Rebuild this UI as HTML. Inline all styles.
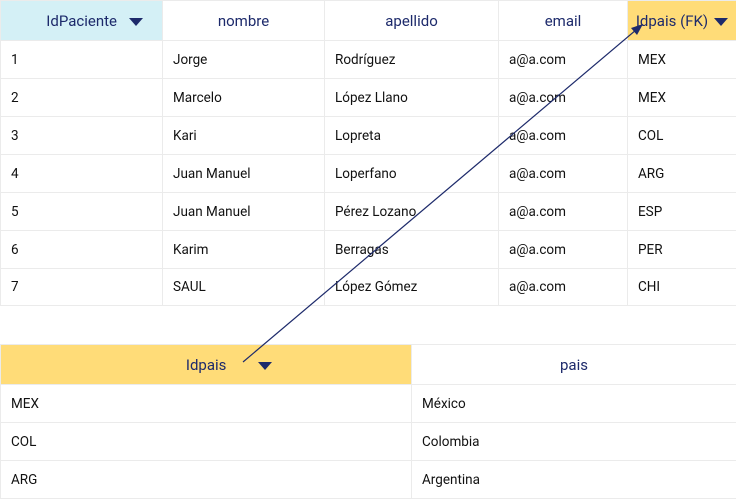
<!DOCTYPE html>
<html><head><meta charset="utf-8"><style>
body{margin:0;width:736px;height:499px;background:#fff;position:relative;overflow:hidden;font-family:"Roboto","Liberation Sans",sans-serif}
table{border-collapse:collapse;position:absolute;left:0;table-layout:fixed}
td,th{border:1px solid #ebebeb;padding:0 0 0 10px;font-size:13.5px;color:#111;text-align:left;font-weight:normal;white-space:nowrap}
th{color:#1d2a6b;font-size:15px;text-align:center;padding:0}
.tri{display:inline-block;width:0;height:0;border-left:7px solid transparent;border-right:7px solid transparent;border-top:8px solid #1d2a6b;vertical-align:middle;margin-left:6px}
</style></head><body>
<table style="top:0;width:736px">
<colgroup><col style="width:162px"><col style="width:162px"><col style="width:174px"><col style="width:129px"><col style="width:109px"></colgroup>
<tr style="height:40px"><th style="background:#d4f0f6;padding-left:26px">IdPaciente <span class="tri" style="margin-left:8px"></span></th><th>nombre</th><th>apellido</th><th>email</th><th style="background:#ffdc78">Idpais (FK)<span class="tri"></span></th></tr>
<tr style="height:38px"><td>1</td><td>Jorge</td><td>Rodríguez</td><td>a@a.com</td><td>MEX</td></tr>
<tr style="height:38px"><td>2</td><td>Marcelo</td><td>López Llano</td><td>a@a.com</td><td>MEX</td></tr>
<tr style="height:38px"><td>3</td><td>Kari</td><td>Lopreta</td><td>a@a.com</td><td>COL</td></tr>
<tr style="height:38px"><td>4</td><td>Juan Manuel</td><td>Loperfano</td><td>a@a.com</td><td>ARG</td></tr>
<tr style="height:38px"><td>5</td><td>Juan Manuel</td><td>Pérez Lozano</td><td>a@a.com</td><td>ESP</td></tr>
<tr style="height:38px"><td>6</td><td>Karim</td><td>Berragas</td><td>a@a.com</td><td>PER</td></tr>
<tr style="height:37px"><td>7</td><td>SAUL</td><td>López Gómez</td><td>a@a.com</td><td>CHI</td></tr>
</table>
<table style="top:344px;width:736px">
<colgroup><col style="width:411px"><col style="width:325px"></colgroup>
<tr style="height:40px"><th style="background:#ffdc78;padding-left:46px">Idpais <span class="tri" style="margin-left:28px"></span></th><th>pais</th></tr>
<tr style="height:38px"><td>MEX</td><td>México</td></tr>
<tr style="height:38px"><td>COL</td><td>Colombia</td></tr>
<tr style="height:38px"><td>ARG</td><td>Argentina</td></tr>
</table>
<svg style="position:absolute;left:0;top:0" width="736" height="499">
<line x1="243" y1="362" x2="636" y2="30" stroke="#1d2a6b" stroke-width="1.2"/>
<polygon points="643,24 631,28 637,35" fill="#1d2a6b"/>
</svg>
</body></html>
